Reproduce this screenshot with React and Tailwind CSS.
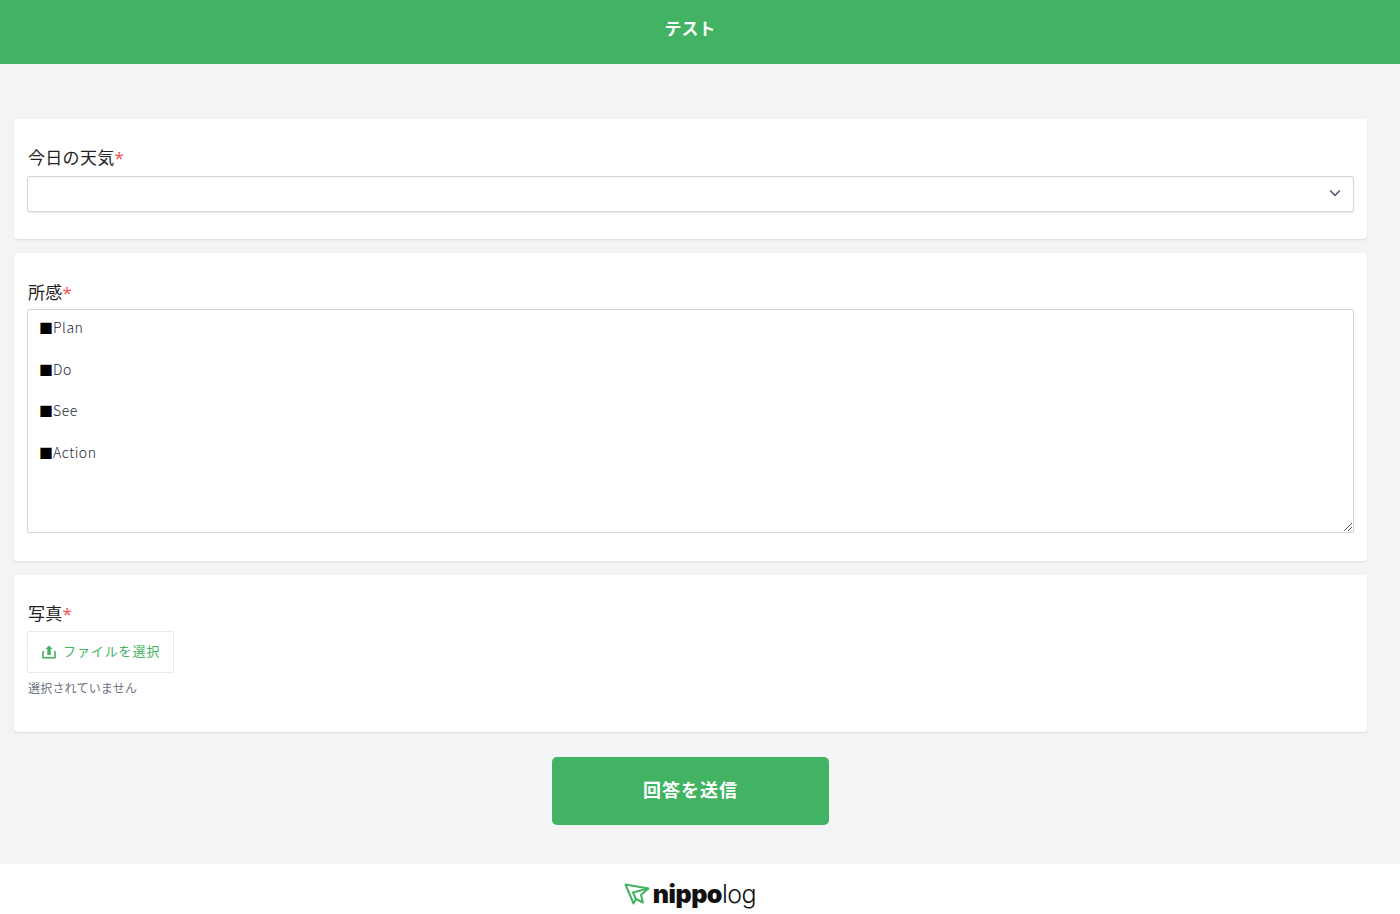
import React from "react";

const Label = ({ children, className }) => (
  <div className={`ml-[1px] text-[17px] leading-[24px] tracking-[0.3px] text-[#222222] ${className}`}>
    {children}
    <span className="font-['Noto_Sans',sans-serif] text-[#f2555a]">*</span>
  </div>
);

const Line = ({ text, className }) => (
  <p className={className}>
    <span className="text-black tracking-normal">■</span>
    {text}
  </p>
);

export default function App() {
  return (
    <div className="min-h-[914px] flex flex-col bg-[#f3f4f6] font-['Noto_Sans_CJK_JP',sans-serif] text-[#333333]">
      <header className="h-16 bg-[#41b362] flex items-center justify-center pr-[20px] pb-[9px]">
        <h1 className="text-[17px] font-bold text-white">テスト</h1>
      </header>
      <main className="flex-1 flex flex-col pl-[14px] pr-[33px] pt-[55px]">
        <section className="bg-white rounded shadow-[0_1px_2px_rgba(0,0,0,0.1)] h-[120px] pl-[13px] pr-[13px] pt-[26px] mb-[14px]">
          <Label className="h-[31px]">今日の天気</Label>
          <div className="relative h-[36px] border border-[#d1d5db] rounded-[2px] shadow-[0_1px_1px_rgba(0,0,0,0.08)]">
            <svg className="absolute right-[10px] top-[8px]" width="16" height="16" viewBox="0 0 20 20" fill="none" stroke="#5b6478" strokeWidth="2.200" strokeLinecap="round" strokeLinejoin="round"><path d="M4.500 7.500l5.500 5.500 5.500-5.500" /></svg>
          </div>
        </section>
        <section className="bg-white rounded shadow-[0_1px_2px_rgba(0,0,0,0.1)] h-[308px] pl-[13px] pr-[13px] pt-[27px] mb-[14px]">
          <Label className="h-[29px]">所感</Label>
          <div className="relative h-[224px] border border-[#d1d5db] rounded-[2px] pl-[11px] pt-[7px] text-sm leading-[20px] font-light tracking-[0.55px] text-[#1f2937]">
            <Line className="h-[41.7px]" text="Plan" />
            <Line className="h-[41.7px]" text="Do" />
            <Line className="h-[41.7px]" text="See" />
            <Line text="Action" />
            <svg className="absolute right-[0px] bottom-[0px]" width="10" height="10" viewBox="0 0 10 10" stroke="#555555" strokeWidth="1"><path d="M1 9L9 1M5 9L9 5" /></svg>
          </div>
        </section>
        <section className="bg-white rounded shadow-[0_1px_2px_rgba(0,0,0,0.1)] h-[157px] pl-[13px] pr-[13px] pt-[26px]">
          <Label className="h-[30px]">写真</Label>
          <div className="w-[147px] h-[42px] border border-[#e8eaee] flex items-center pl-[14px] gap-[7px] text-[13px] tracking-[0.9px] text-[#41b362]">
            <svg width="14" height="14" viewBox="0 0 14 14" fill="none"><path d="M1 6V12.800H13V6" stroke="#41b362" strokeWidth="1.600" /><path d="M7 0.500L3.500 4H5.300V10H8.700V4H10.500Z" fill="#41b362" /></svg>
            <span className="-translate-y-[1px]">ファイルを選択</span>
          </div>
          <p className="ml-[1px] mt-[7px] text-xs tracking-[0.2px] text-[#6b7280]">選択されていません</p>
        </section>
        <div className="flex justify-center mt-[25px]">
          <button className="w-[277px] h-[68px] pb-[4px] bg-[#41b362] rounded-[5px] text-white font-bold text-lg tracking-[1px]">回答を送信</button>
        </div>
      </main>
      <footer className="h-[50px] bg-white flex items-center justify-center pr-[20px] pt-[10px]">
        <div className="flex items-center">
          <svg width="26" height="23" viewBox="0 0 26 23" fill="none" stroke="#41b362" strokeWidth="2" strokeLinejoin="round"><path d="M1.500 1.500L24.500 5.500L17 12L19 19.500L12 16L9.500 20.500Z" /><path d="M24 5.500L9 9.500L12 16" /></svg>
          <span className="text-[25px] leading-none font-['Inter',sans-serif] font-black text-[#111111] ml-[3px] tracking-[-0.5px]">nippo<span className="font-light">log</span></span>
        </div>
      </footer>
    </div>
  );
}
